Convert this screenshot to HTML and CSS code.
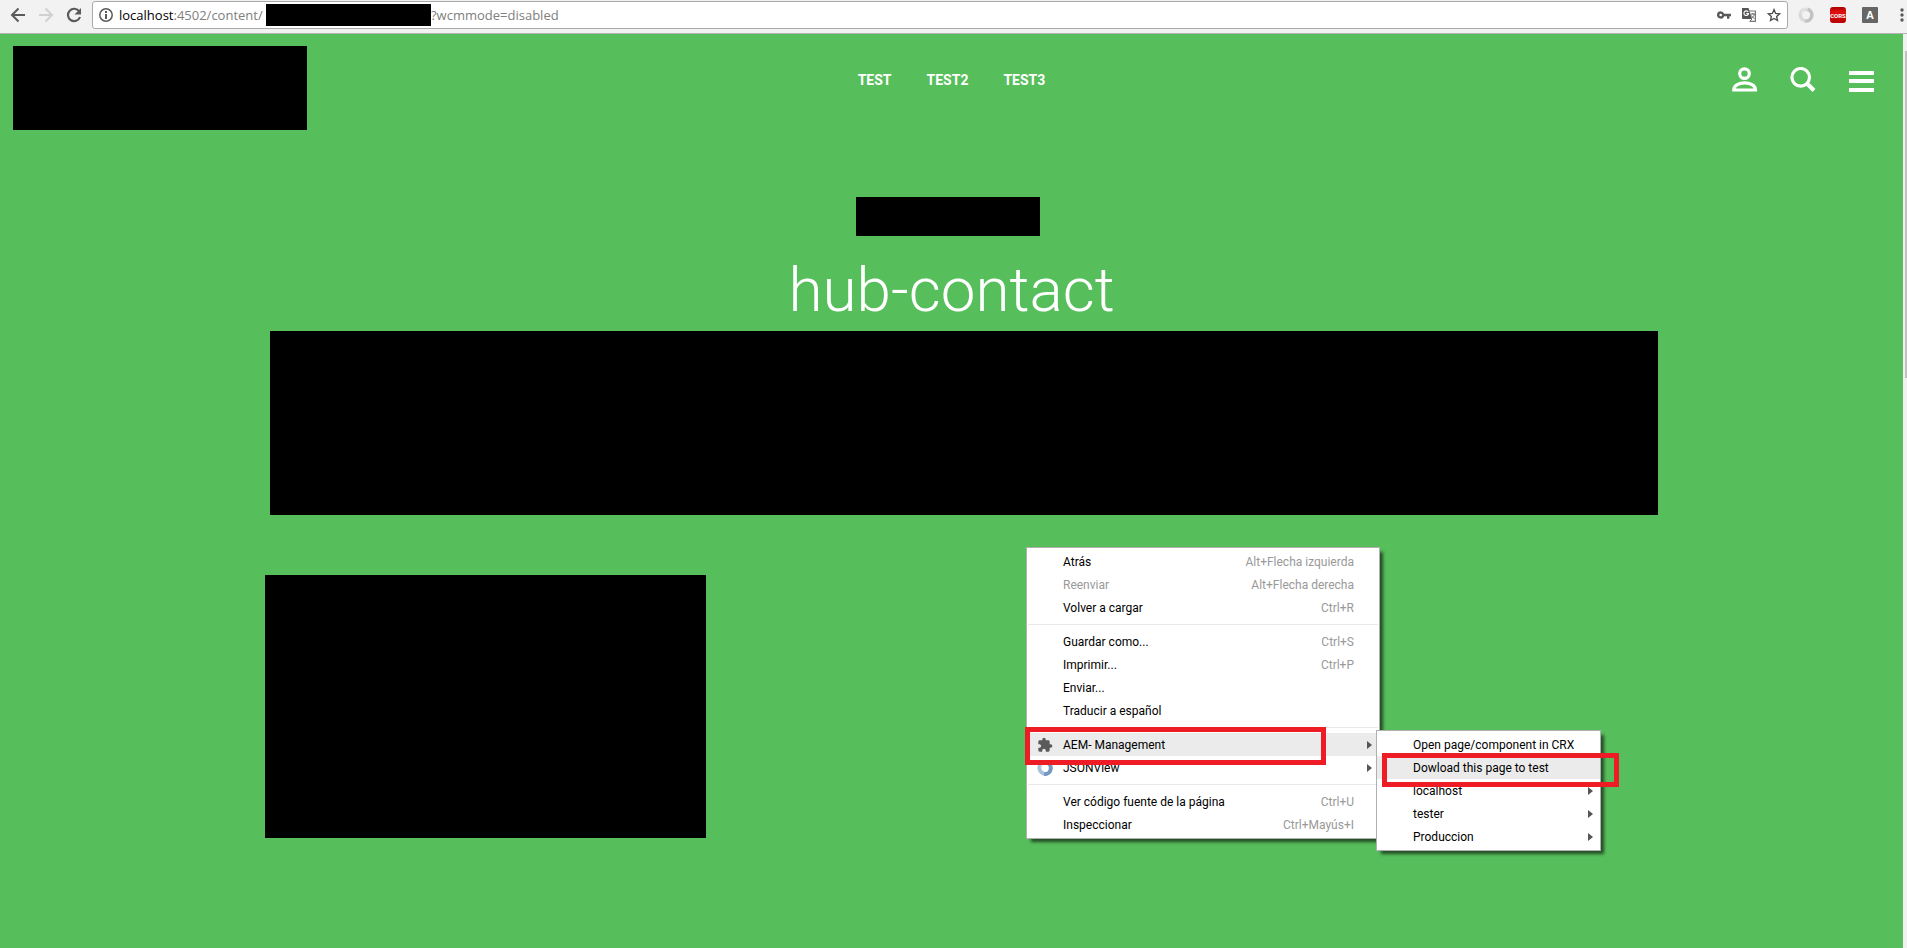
FILE: index.html
```html
<!DOCTYPE html>
<html lang="es">
<head>
<meta charset="utf-8">
<title>hub-contact</title>
<link rel="stylesheet" href="styles.css">
</head>
<body>
<div class="toolbar">
  <button class="tool" aria-label="Atrás"><svg width="16" height="16" viewBox="0 0 16 16" fill="none" stroke="#5a5a5a" stroke-width="2"><path d="M15 8H2.500M8.500 1.500L2 8l6.500 6.500"/></svg></button>
  <button class="tool" aria-label="Reenviar"><svg width="16" height="16" viewBox="0 0 16 16" fill="none" stroke="#d0d0d0" stroke-width="2"><path d="M1 8h12.500M7.500 1.500L14 8l-6.500 6.500"/></svg></button>
  <button class="tool" aria-label="Volver a cargar"><svg width="16" height="16" viewBox="0 0 16 16"><path d="M13.300 4.500A6.200 6.200 0 1 0 14 10" fill="none" stroke="#5a5a5a" stroke-width="2.200"/><path d="M15 1v6.500H8.500z" fill="#5a5a5a"/></svg></button>
  <div class="address">
    <svg class="info" width="14" height="14" viewBox="0 0 14 14"><circle cx="7" cy="7" r="6.200" fill="none" stroke="#5a5a5a" stroke-width="1.500"/><path d="M6 3h2v2H6zM6 6h2v5H6z" fill="#5a5a5a"/></svg>
    <label class="url" for="url"><span class="host">localhost</span>:4502/content/</label>
    <span class="url-mask"></span>
    <input id="url" class="query" type="text" value="?wcmmode=disabled">
    <div class="address-icons">
      <button class="tool" aria-label="Contraseñas"><svg width="14" height="14" viewBox="0 0 14 14"><path fill="#5a5a5a" fill-rule="evenodd" d="M3.700 3.300a3.700 3.700 0 1 0 3.500 4.900H10v2.500h2.400V8.200H14V5.800H7.200A3.700 3.700 0 0 0 3.700 3.300zm0 2.400a1.300 1.300 0 1 1 0 2.600 1.300 1.300 0 0 1 0-2.600z"/></svg></button>
      <button class="tool" aria-label="Traducir"><svg width="14" height="14" viewBox="0 0 14 14"><path d="M5 3h8.400v10.400H8" fill="#fff" stroke="#777" stroke-width="1.200"/><path d="M0 0h6.500L10 11H1a1 1 0 0 1-1-1z" fill="#555"/><path d="M6.200 4A2.300 2.300 0 1 0 6.500 5.600H4.300" fill="none" stroke="#fff" stroke-width="1.100"/><path d="M8.500 6h4.500M10.700 5v1M12.300 6c-.3 2-1.500 3.500-3 4.300M9.500 7.500c.7 1.500 1.700 2.500 3 3M7.500 13.500L10 11" fill="none" stroke="#666"/></svg></button>
      <button class="tool" aria-label="Favorito"><svg width="14" height="14" viewBox="0 0 14 14"><path d="M7 1.600l1.600 3.800 4.100.4-3.100 2.700.9 4L7 10.400l-3.500 2.100.9-4L1.300 5.800l4.100-.4z" fill="none" stroke="#4a4a4a" stroke-width="1.300"/></svg></button>
    </div>
  </div>
  <div class="extensions">
    <button class="tool" aria-label="JSONView"><svg width="16" height="16" viewBox="0 0 16 16" fill="none" stroke-width="3.600"><path d="M9 2a6 6 0 0 0-2 11.800" stroke="#d9d9d9"/><path d="M7 14A6 6 0 0 0 9.500 2.300" stroke="#c2c2c2"/><path d="M9 0C3 3 4 7 4.500 9" stroke="#ededed" stroke-width="1"/></svg></button>
    <button class="tool" aria-label="CORS"><span class="badge badge-cors">CORS</span></button>
    <button class="tool" aria-label="AEM"><span class="badge">A</span></button>
    <button class="tool" aria-label="Menú"><svg width="4" height="16" viewBox="0 0 4 16" fill="#5a5a5a"><circle cx="2" cy="3" r="1.700"/><circle cx="2" cy="8" r="1.700"/><circle cx="2" cy="13" r="1.700"/></svg></button>
  </div>
</div>
<div class="viewport">
  <div class="page">
    <header class="header">
      <div class="mask logo"></div>
      <nav class="nav"><a href="#">TEST</a><a href="#">TEST2</a><a href="#">TEST3</a></nav>
      <div class="actions">
        <button class="tool" aria-label="Usuario"><svg width="26" height="26" viewBox="0 0 26 26" fill="none" stroke="#fff" stroke-width="3.200"><circle cx="12.500" cy="6.600" r="4.800"/><path d="M1.800 23c0-9.400 21.700-9.400 21.700 0z"/></svg></button>
        <button class="tool" aria-label="Buscar"><svg width="26" height="26" viewBox="0 0 26 26" fill="none" stroke="#fff"><circle cx="10.700" cy="10.300" r="8.800" stroke-width="3.200"/><path d="M17 16.500l7 7" stroke-width="4"/></svg></button>
        <button class="tool" aria-label="Menú"><svg width="26" height="26" viewBox="0 0 26 26" fill="#fff"><path d="M1 4h25v4H1zM1 12h25v4H1zM1 21h25v4H1z"/></svg></button>
      </div>
    </header>
    <main>
      <div class="mask eyebrow"></div>
      <h1 class="title">hub-contact</h1>
      <div class="mask banner"></div>
      <div class="mask card"></div>
    </main>
  </div>
  <div class="scrollbar"><div class="thumb"></div></div>
</div>

<ul class="menu main-menu">
  <li><button>Atrás<kbd>Alt+Flecha izquierda</kbd></button></li>
  <li><button disabled>Reenviar<kbd>Alt+Flecha derecha</kbd></button></li>
  <li><button>Volver a cargar<kbd>Ctrl+R</kbd></button></li>
  <li class="separator"></li>
  <li><button>Guardar como...<kbd>Ctrl+S</kbd></button></li>
  <li><button>Imprimir...<kbd>Ctrl+P</kbd></button></li>
  <li><button>Enviar...</button></li>
  <li><button>Traducir a español</button></li>
  <li class="separator"></li>
  <li><button class="active parent"><svg class="menu-icon" width="16" height="16" viewBox="0 0 24 24" fill="#5a5a5a"><path d="M20.500 11H19V7c0-1.100-.9-2-2-2h-4V3.500a2.500 2.500 0 0 0-5 0V5H4c-1.100 0-2 .9-2 2v3.800h1.500a2.700 2.700 0 0 1 0 5.400H2V20c0 1.100.9 2 2 2h3.800v-1.500a2.700 2.700 0 0 1 5.400 0V22H17c1.100 0 2-.9 2-2v-4h1.500a2.500 2.500 0 0 0 0-5z"/></svg>AEM- Management</button></li>
  <li><button class="parent"><svg class="menu-icon" width="16" height="16" viewBox="0 0 16 16" fill="none" stroke-width="4"><path d="M9 2a6 6 0 0 0-2 11.800" stroke="#a9bfdc"/><path d="M7 14A6 6 0 0 0 9.500 2.300" stroke="#7497c4"/><path d="M9 0C3 3 4 7 4.500 9" stroke="#dbe5f1" stroke-width="1"/></svg>JSONView</button></li>
  <li class="separator"></li>
  <li><button>Ver código fuente de la página<kbd>Ctrl+U</kbd></button></li>
  <li><button>Inspeccionar<kbd>Ctrl+Mayús+I</kbd></button></li>
</ul>
<ul class="menu sub-menu">
  <li><button>Open page/component in CRX</button></li>
  <li><button class="active">Dowload this page to test</button></li>
  <li><button class="parent">localhost</button></li>
  <li><button class="parent">tester</button></li>
  <li><button class="parent">Produccion</button></li>
</ul>
<div class="highlight highlight-main"></div>
<div class="highlight highlight-sub"></div>
</body>
</html>
```

FILE: styles.css
```css
* { box-sizing: border-box; }

body {
  margin: 0;
  min-height: 100vh;
  display: flex;
  flex-direction: column;
  position: relative;
  overflow: hidden;
  font-family: "Roboto", sans-serif;
}

button {
  border: 0;
  padding: 0;
  background: none;
  font: inherit;
  color: inherit;
}

svg { display: block; }

.mask { background: #000; }

/* Browser toolbar */
.toolbar {
  display: flex;
  align-items: center;
  gap: 12px;
  height: 34px;
  padding: 1px 3px 4px 10px;
  background: #f2f2f2;
  border-bottom: 1px solid #b3b3b3;
}

.address {
  flex: 1;
  display: flex;
  align-items: center;
  height: 28px;
  margin: 0 -2px;
  padding: 0 6px;
  background: #fff;
  border: 1px solid #a9a9a9;
  border-radius: 3px;
  font-family: "Open Sans", sans-serif;
  font-size: 13px;
  color: #808080;
}

.url { margin-left: 6px; white-space: nowrap; width: 147px; }
.host { color: #000; }
.url-mask { width: 165px; height: 22px; background: #000; }

.query {
  flex: 1;
  min-width: 0;
  padding: 0;
  border: 0;
  outline: 0;
  background: none;
  font: inherit;
  color: inherit;
}

.address-icons { display: flex; gap: 11px; }
.extensions { display: flex; align-items: center; gap: 16px; }
.extensions .tool:last-child { margin-left: 6px; }

.badge {
  display: grid;
  place-items: center;
  width: 16px;
  height: 16px;
  border-radius: 1px;
  background: #666;
  color: #fff;
  font: bold 11px "Liberation Sans", sans-serif;
}

.badge-cors {
  border-radius: 3px;
  background: linear-gradient(#a80000, #e01010 30%, #b80000);
  font: bold 6px "Roboto", sans-serif;
}

/* Page */
.viewport { flex: 1; display: flex; }
.page { flex: 1; background: #56be5b; }
.scrollbar { width: 4px; padding: 17px 0 0 2px; background: #f1f1f1; }
.thumb { height: 327px; background: #c1c1c1; }

.header {
  display: grid;
  grid-template-columns: 1fr auto 1fr;
  align-items: start;
  padding-top: 12px;
}

.logo { width: 294px; height: 84px; margin-left: 13px; }

.nav, .actions {
  display: flex;
  align-items: center;
  gap: 35px;
  height: 68px;
}

.nav a {
  color: #fff;
  text-decoration: none;
  font: bold 14px "Roboto", sans-serif;
}

.actions { gap: 32px; justify-content: flex-end; margin-right: 29px; }

.eyebrow { width: 184px; height: 39px; margin: 67px auto 0 45%; }

.title {
  margin: 18px 0 5px;
  text-align: center;
  color: #fff;
  font: 300 62px/72px "Roboto", sans-serif;
}

.banner { height: 184px; margin: 0 245px 0 270px; }
.card { width: 441px; height: 263px; margin: 60px 0 0 265px; }

/* Context menus */
.menu {
  position: absolute;
  margin: 0;
  padding: 2px 0;
  list-style: none;
  background: #fff;
  border: 1px solid #b0b0b0;
  box-shadow: 4px 4px 3px -1px rgba(0, 0, 0, .6);
  font-size: 12px;
}

.main-menu { left: 1026px; top: 547px; width: 354px; }
.sub-menu { left: 1376px; top: 730px; width: 225px; }

.menu button {
  position: relative;
  display: flex;
  align-items: center;
  justify-content: space-between;
  width: 100%;
  height: 23px;
  padding: 1px 25px 0 36px;
  color: #000;
  white-space: nowrap;
}

.menu button:disabled, .menu kbd { color: #999; }
.menu kbd { font: inherit; }
.menu .active { background: #ebebeb; }

.parent::after {
  content: "";
  position: absolute;
  right: 7px;
  top: 8px;
  border: 4px solid transparent;
  border-left: 5px solid #555;
  border-right: 0;
}

.menu-icon { position: absolute; left: 10px; top: 4px; }

.separator {
  height: 1px;
  margin: 5px 1px;
  background: #e9e9e9;
}

.highlight { position: absolute; border: 5px solid #ee1c24; }
.highlight-main { left: 1025px; top: 727px; width: 301px; height: 38px; }
.highlight-sub { left: 1382px; top: 753px; width: 237px; height: 34px; }
```
